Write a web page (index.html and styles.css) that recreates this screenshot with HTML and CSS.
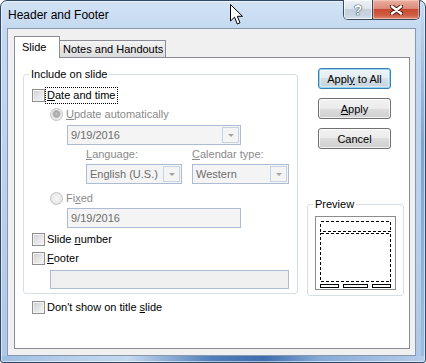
FILE: index.html
```html
<!DOCTYPE html>
<html lang="en">
<head>
<meta charset="utf-8">
<title>Header and Footer</title>
<link rel="stylesheet" href="styles.css">
</head>
<body>
<div class="window">
  <div class="titlebar">
    <div class="title">Header and Footer</div>
    <div class="caption">
      <div class="cap-btn help"><span class="q">?</span></div>
      <div class="cap-btn close">
        <svg width="13" height="10" viewBox="0 0 13 10"><path class="x-out" d="M2 1.5 L11 8.5 M11 1.5 L2 8.5"/><path class="x-in" d="M2 1.5 L11 8.5 M11 1.5 L2 8.5"/></svg>
      </div>
    </div>
  </div>
  <div class="client">
    <div class="tabs">
      <div class="tab active">Slide</div>
      <div class="tab inactive">Notes and Handouts</div>
    </div>
    <div class="panel">
      <div class="left">
        <div class="group include">
          <div class="gtitle">Include on slide</div>
          <div class="row r-date"><span class="cb"></span><span class="lbl focus"><u>D</u>ate and time</span></div>
          <div class="row r-auto ind"><span class="rb on"></span><span class="lbl dis"><u>U</u>pdate automatically</span></div>
          <div class="combo date"><span class="val">9/19/2016</span><span class="dd"><i class="arr"></i></span></div>
          <div class="pair labels"><span class="dis"><u>L</u>anguage:</span><span class="dis"><u>C</u>alendar type:</span></div>
          <div class="pair combos">
            <div class="combo"><span class="val">English (U.S.)</span><span class="dd"><i class="arr"></i></span></div>
            <div class="combo"><span class="val">Western</span><span class="dd"><i class="arr"></i></span></div>
          </div>
          <div class="row r-fixed ind"><span class="rb"></span><span class="lbl dis">Fi<u>x</u>ed</span></div>
          <div class="textbox fixed"><span class="val">9/19/2016</span></div>
          <div class="row r-slide"><span class="cb"></span><span class="lbl">Slide <u>n</u>umber</span></div>
          <div class="row r-footer"><span class="cb"></span><span class="lbl"><u>F</u>ooter</span></div>
          <div class="textbox footer"></div>
        </div>
        <div class="row r-title"><span class="cb"></span><span class="lbl">Don't show on title <u>s</u>lide</span></div>
      </div>
      <div class="right">
        <div class="btn default"><span>Appl<u>y</u> to All</span></div>
        <div class="btn"><span><u>A</u>pply</span></div>
        <div class="btn"><span>Cancel</span></div>
        <div class="group preview">
          <div class="gtitle">Preview</div>
          <svg class="slide" width="81" height="74" viewBox="0 0 81 74" shape-rendering="crispEdges">
            <rect x="0.5" y="0.5" width="80" height="73" fill="#fff" stroke="#8c8c8c"/>
            <rect x="5.5" y="5.5" width="70" height="10" fill="none" stroke="#000" stroke-dasharray="3 2"/>
            <rect x="5.5" y="17.5" width="70" height="48" fill="none" stroke="#000" stroke-dasharray="3 2"/>
            <rect x="5.5" y="68.5" width="18" height="3" fill="#fff" stroke="#000"/>
            <rect x="28.5" y="68.5" width="24" height="3" fill="#fff" stroke="#000"/>
            <rect x="57.5" y="68.5" width="18" height="3" fill="#fff" stroke="#000"/>
          </svg>
        </div>
      </div>
    </div>
  </div>
  <svg class="cursor" width="14" height="22" viewBox="0 0 14 22"><path d="M0.5 0.5 L0.5 17 L4.5 13.2 L7.3 20 L10 18.8 L7.3 12.3 L12.5 12.3 Z" fill="#fff" stroke="#000" stroke-width="1" stroke-linejoin="miter"/></svg>
</div>
</body>
</html>
```

FILE: styles.css
```css
* { box-sizing: border-box; }
html, body { margin: 0; padding: 0; }
body {
  width: 426px;
  height: 363px;
  overflow: hidden;
  background: #fff;
  font-family: "Liberation Sans", Arial, sans-serif;
  font-size: 11px;
  color: #000;
}
u { text-decoration: underline; text-underline-offset: 1px; }

.window {
  position: relative;
  width: 426px;
  height: 363px;
  border: 1px solid #30496a;
  border-radius: 7px 7px 3px 3px;
  padding: 0 9px 6px 6px;
  display: flex;
  flex-direction: column;
  background:
    linear-gradient(to right, #9fbde0 0, #b9d0eb 18%, #c4d8ef 30%, #4e7db8 50%, #3d6eae 62%, #86a9d6 75%, #b6cdea 100%) left bottom / 100% 6px no-repeat,
    linear-gradient(to bottom, #c8dbf0 0, #7fa3cf 40%, #9fbde0 100%) right top / 4px 100% no-repeat,
    linear-gradient(to bottom, #d3e3f5 0, #c4d9f0 27px, #bad1eb 55%, #adc7e6 100%);
  box-shadow: inset 0 0 0 1px rgba(255, 255, 255, 0.55);
}

.titlebar {
  flex: none;
  height: 27px;
  display: flex;
  align-items: flex-start;
  justify-content: space-between;
}
.title {
  margin: 7px 0 0 1px;
  font-size: 12px;
  line-height: 14px;
  color: #000;
}
.caption {
  display: flex;
  height: 20px;
  margin: -1px -4px 0 0;
  border: 1px solid #3b4b5e;
  border-top: none;
  border-radius: 0 0 5px 5px;
  overflow: hidden;
}
.cap-btn {
  display: flex;
  align-items: center;
  justify-content: center;
  height: 100%;
}
.help {
  width: 28px;
  background: linear-gradient(to bottom, #eef2f7 0, #dce4ed 45%, #c3cfdc 50%, #c9d5e2 85%, #dde6ef 100%);
  box-shadow: inset 0 0 0 1px rgba(255, 255, 255, 0.6);
}
.q {
  font-weight: bold;
  font-size: 14px;
  line-height: 14px;
  color: #fff;
  text-shadow: 0 0 1px #2f3c4b, 0 0 1px #2f3c4b, 0 0 1px #2f3c4b;
}
.close {
  width: 47px;
  border-left: 1px solid #3b4b5e;
  background: linear-gradient(to bottom, #eab0a2 0, #dc8a78 45%, #c84a33 50%, #cf5d44 80%, #e28c76 100%);
  box-shadow: inset 0 0 0 1px rgba(255, 220, 210, 0.5);
}
.x-out { stroke: #47120b; stroke-width: 4.4; stroke-linecap: round; fill: none; }
.x-in { stroke: #fff; stroke-width: 2.6; stroke-linecap: round; fill: none; }

.client {
  flex: 1;
  display: flex;
  flex-direction: column;
  border: 1px solid #8799b0;
  background: #f0f0f0;
  padding: 7px 5px 6px 6px;
}

.tabs {
  flex: none;
  height: 21px;
  display: flex;
  align-items: flex-end;
}
.tab {
  line-height: 14px;
  border: 1px solid #898c95;
  border-bottom: none;
  white-space: nowrap;
}
.tab.active {
  position: relative;
  z-index: 1;
  width: 46px;
  height: 22px;
  margin-bottom: -1px;
  padding: 3px 0 0 7px;
  background: #fff;
}
.tab.inactive {
  width: 107px;
  height: 17px;
  margin-left: -1px;
  padding: 1px 0 0 3px;
  background: linear-gradient(to bottom, #f4f4f4 0, #e8e8e8 50%, #dcdcdc 100%);
}

.panel {
  flex: 1;
  display: flex;
  border: 1px solid #898c95;
  background: #fff;
}

.left {
  width: 275px;
  margin-left: 8px;
  display: flex;
  flex-direction: column;
}
.right {
  width: 97px;
  margin-left: 9px;
  display: flex;
  flex-direction: column;
}

.group {
  border: 1px solid #d5dfe5;
  border-radius: 3px;
}
.gtitle {
  width: max-content;
  line-height: 13px;
  padding: 0 2px;
  background: #fff;
  margin-top: -7px;
}
.include {
  margin-top: 16px;
  padding: 0 0 4px 8px;
}
.include .gtitle { margin-left: -3px; }

.row {
  display: flex;
  align-items: center;
  height: 18px;
}
.ind { margin-left: 18px; }
.r-date { margin-top: 5px; }
.r-auto { margin-top: 1px; }
.r-fixed { margin-top: 5px; }
.r-slide { margin-top: 2px; }
.r-footer { margin-top: 1px; }
.r-title { margin: 4px 0 0 9px; }

.lbl { line-height: 15px; white-space: nowrap; }
.cb + .lbl { margin-left: 2px; }
.cb + .lbl.focus { margin-left: 1px; padding: 0 1px; outline: 1px dotted #000; }
.rb + .lbl { margin-left: 3px; }
.dis { color: #8a8a8a; }

.cb {
  flex: none;
  width: 13px;
  height: 13px;
  border: 1px solid #8f8f8f;
  background: linear-gradient(135deg, #cdcdcd 0, #e4e4e4 50%, #f7f7f7 100%);
  box-shadow: inset 0 0 0 1px #f3f3f3;
}
.rb {
  flex: none;
  width: 13px;
  height: 13px;
  border-radius: 50%;
  border: 1px solid #c4c4c4;
  background: radial-gradient(circle at 50% 50%, #f6f6f6 0, #e7e7e7 70%, #dcdcdc 100%);
}
.rb.on {
  background: radial-gradient(circle at 50% 45%, #c9c9c9 0, #a6a6a6 2.6px, #bdbdbd 3.6px, #ececec 4.4px, #e2e2e2 100%);
}

.combo, .textbox {
  display: flex;
  align-items: center;
  height: 20px;
  border: 1px solid #abbcd4;
  background: #f4f4f4;
  color: #6d6d6d;
}
.val {
  flex: 1;
  padding-left: 3px;
  line-height: 14px;
  white-space: nowrap;
  overflow: hidden;
}
.dd {
  flex: none;
  width: 17px;
  height: 16px;
  margin-right: 1px;
  border: 1px solid #c8d3e1;
  display: flex;
  align-items: center;
  justify-content: center;
}
.arr {
  display: block;
  width: 0;
  height: 0;
  border-left: 3px solid transparent;
  border-right: 3px solid transparent;
  border-top: 3px solid #a3a3a3;
  margin-top: 1px;
}
.combo.date { width: 174px; margin: 2px 0 0 35px; }
.pair {
  display: grid;
  grid-template-columns: 96px 97px;
  column-gap: 10px;
  margin-left: 54px;
}
.labels { margin-top: 2px; height: 14px; line-height: 14px; white-space: nowrap; }
.combos { margin-top: 3px; }
.textbox.fixed { width: 174px; margin: 1px 0 0 35px; }
.textbox.footer { width: 239px; height: 19px; margin: 3px 0 0 18px; background: #f0f0f0; }

.btn {
  width: 73px;
  height: 21px;
  margin: 9px 0 0 11px;
  border: 1px solid #707070;
  border-radius: 3px;
  display: flex;
  align-items: center;
  justify-content: center;
  line-height: 14px;
  white-space: nowrap;
  background: linear-gradient(to bottom, #f2f2f2 0, #ebebeb 50%, #dddddd 50%, #cfcfcf 100%);
  box-shadow: inset 0 0 0 1px rgba(255, 255, 255, 0.75);
}
.btn.default {
  margin-top: 10px;
  border-color: #3c7fb1;
  background: linear-gradient(to bottom, #eef4f8 0, #e4edf3 50%, #d4dfe7 50%, #c6d3dc 100%);
  box-shadow: inset 0 0 0 1px #8fd6f4, inset 0 0 0 2px rgba(255, 255, 255, 0.4);
}

.preview {
  margin-top: 55px;
  padding: 0 0 5px 0;
}
.preview .gtitle { margin-left: 5px; }
.slide {
  display: block;
  margin: 5px 0 0 7px;
}

.cursor {
  position: absolute;
  left: 229px;
  top: 3px;
}
```
